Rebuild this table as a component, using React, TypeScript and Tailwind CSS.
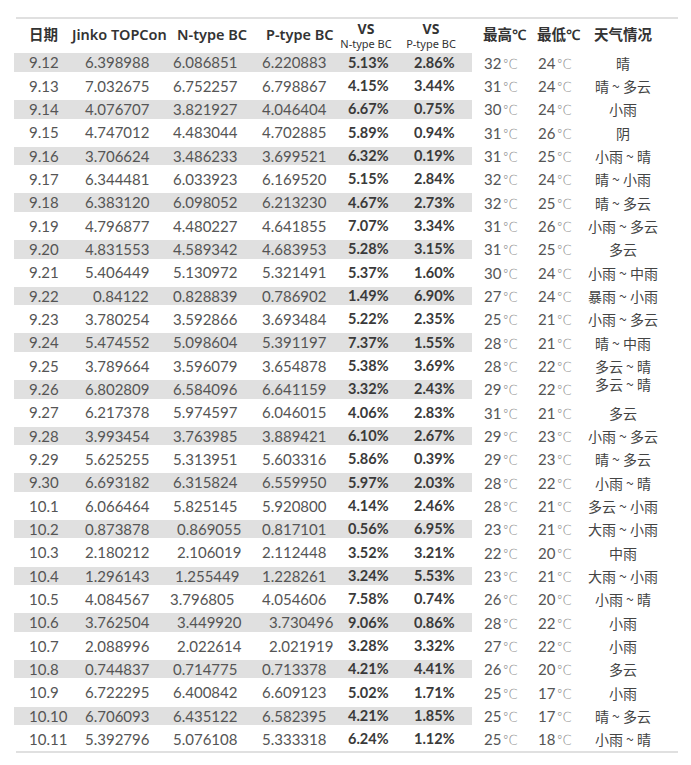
type Row = {
  d: string;
  j: string;
  n: string;
  p: string;
  vn: string;
  vp: string;
  hi: string;
  lo: string;
  w: string;
  js?: string;
  ns?: string;
  ps?: string;
  up?: boolean;
};

// [日期, Jinko, N-type, P-type, VS N, VS P, 最高, 最低, 天气]
const raw: string[][] = [
  ["9.12", "6.398988", "6.086851", "6.220883", "5.13%", "2.86%", "32", "24", "晴"],
  ["9.13", "7.032675", "6.752257", "6.798867", "4.15%", "3.44%", "31", "24", "晴 ~ 多云"],
  ["9.14", "4.076707", "3.821927", "4.046404", "6.67%", "0.75%", "30", "24", "小雨"],
  ["9.15", "4.747012", "4.483044", "4.702885", "5.89%", "0.94%", "31", "26", "阴"],
  ["9.16", "3.706624", "3.486233", "3.699521", "6.32%", "0.19%", "31", "25", "小雨 ~ 晴"],
  ["9.17", "6.344481", "6.033923", "6.169520", "5.15%", "2.84%", "32", "24", "晴 ~ 小雨"],
  ["9.18", "6.383120", "6.098052", "6.213230", "4.67%", "2.73%", "32", "25", "晴 ~ 多云"],
  ["9.19", "4.796877", "4.480227", "4.641855", "7.07%", "3.34%", "31", "26", "小雨 ~ 多云"],
  ["9.20", "4.831553", "4.589342", "4.683953", "5.28%", "3.15%", "31", "25", "多云"],
  ["9.21", "5.406449", "5.130972", "5.321491", "5.37%", "1.60%", "30", "24", "小雨 ~ 中雨"],
  ["9.22", "0.84122", "0.828839", "0.786902", "1.49%", "6.90%", "27", "24", "暴雨 ~ 小雨"],
  ["9.23", "3.780254", "3.592866", "3.693484", "5.22%", "2.35%", "25", "21", "小雨 ~ 多云"],
  ["9.24", "5.474552", "5.098604", "5.391197", "7.37%", "1.55%", "28", "21", "晴 ~ 中雨"],
  ["9.25", "3.789664", "3.596079", "3.654878", "5.38%", "3.69%", "28", "22", "多云 ~ 晴"],
  ["9.26", "6.802809", "6.584096", "6.641159", "3.32%", "2.43%", "29", "22", "多云 ~ 晴"],
  ["9.27", "6.217378", "5.974597", "6.046015", "4.06%", "2.83%", "31", "21", "多云"],
  ["9.28", "3.993454", "3.763985", "3.889421", "6.10%", "2.67%", "29", "23", "小雨 ~ 多云"],
  ["9.29", "5.625255", "5.313951", "5.603316", "5.86%", "0.39%", "29", "23", "晴 ~ 多云"],
  ["9.30", "6.693182", "6.315824", "6.559950", "5.97%", "2.03%", "28", "22", "小雨 ~ 晴"],
  ["10.1", "6.066464", "5.825145", "5.920800", "4.14%", "2.46%", "28", "21", "多云 ~ 小雨"],
  ["10.2", "0.873878", "0.869055", "0.817101", "0.56%", "6.95%", "23", "21", "大雨 ~ 小雨"],
  ["10.3", "2.180212", "2.106019", "2.112448", "3.52%", "3.21%", "22", "20", "中雨"],
  ["10.4", "1.296143", "1.255449", "1.228261", "3.24%", "5.53%", "23", "21", "大雨 ~ 小雨"],
  ["10.5", "4.084567", "3.796805", "4.054606", "7.58%", "0.74%", "26", "20", "小雨 ~ 晴"],
  ["10.6", "3.762504", "3.449920", "3.730496", "9.06%", "0.86%", "28", "22", "小雨"],
  ["10.7", "2.088996", "2.022614", "2.021919", "3.28%", "3.32%", "27", "22", "小雨"],
  ["10.8", "0.744837", "0.714775", "0.713378", "4.21%", "4.41%", "26", "20", "多云"],
  ["10.9", "6.722295", "6.400842", "6.609123", "5.02%", "1.71%", "25", "17", "小雨"],
  ["10.10", "6.706093", "6.435122", "6.582395", "4.21%", "1.85%", "25", "17", "晴 ~ 多云"],
  ["10.11", "5.392796", "5.076108", "5.333318", "6.24%", "1.12%", "25", "18", "小雨 ~ 晴"],
];

const rows: Row[] = raw.map((r) => ({
  d: r[0], j: r[1], n: r[2], p: r[3], vn: r[4], vp: r[5], hi: r[6], lo: r[7], w: r[8],
}));

rows[10].js = "pl-[21px]";
rows[20].ns = "pl-[7px]";
rows[21].ns = "pl-[7px]";
rows[22].ns = "pl-[5px]";
rows[23].ns = "pl-0";
rows[24].ns = "pl-[7px]";
rows[25].ns = "pl-[7px]";
rows[24].ps = "pl-[11px]";
rows[25].ps = "pl-[11px]";
rows[14].up = true;

const num = "font-['Lato',sans-serif] text-[15px] text-[#555]";
const bold = "font-['Lato',sans-serif] font-bold text-[14.5px] text-[#3a3a3a]";
const head = "font-['Noto_Sans','Noto_Sans_CJK_SC',sans-serif] font-semibold text-[14.5px] text-[#333]";
const cjk = "font-['Noto_Sans_CJK_SC',sans-serif] text-[14px] text-[#444]";

function Temp({ v }: { v: string }) {
  return (
    <span className={num}>
      {v}
      <span className="font-['DejaVu_Sans',sans-serif] font-extralight text-[14px] text-[#888] tracking-[-1px] ml-[1px]">℃</span>
    </span>
  );
}

function VsHead({ sub, w }: { sub: string; w: string }) {
  return (
    <div className={`${w} flex flex-col items-center gap-[1px] pt-[1px]`}>
      <span className="font-['Noto_Sans',sans-serif] font-bold text-[14px] leading-[14px] text-[#333]">VS</span>
      <span className="font-['Noto_Sans',sans-serif] text-[11px] leading-[13px] text-[#333]">{sub}</span>
    </div>
  );
}

export default function App() {
  return (
    <div className="w-[691px] h-[765px] bg-white pt-[17px]">
      <div className="ml-[14px] w-[664px]">
        <div className="ml-[2px] h-[2px] bg-[#e0e0e0]" />
        {/* header */}
        <div className="flex items-center h-[32px]">
          <div className={`w-[58px] pl-[15px] ${head}`}>日期</div>
          <div className={`w-[98px] ${head}`}>Jinko TOPCon</div>
          <div className={`w-[88px] pl-[7px] ${head}`}>N-type BC</div>
          <div className={`w-[77px] pl-[8px] ${head}`}>P-type BC</div>
          <VsHead sub="N-type BC" w="w-[62px]" />
          <VsHead sub="P-type BC" w="w-[68px]" />
          <div className="w-[7px]" />
          <div className={`w-[58px] pl-[11px] ${head}`}>最高℃</div>
          <div className={`w-[55px] pl-[7px] ${head}`}>最低℃</div>
          <div className={`w-[76px] text-center ${head}`}>天气情况</div>
        </div>
        {/* body */}
        {rows.map((r, i) => (
          <div key={r.d} className="flex items-center h-[23.34px]">
            <div className={`flex items-center w-[458px] h-[18.5px] ${i % 2 === 0 ? "bg-[#e0e0e0]" : ""}`}>
              <div className={`w-[58px] pl-[15px] ${num}`}>{r.d}</div>
              <div className={`w-[98px] ${r.js ?? "pl-[13px]"} ${num}`}>{r.j}</div>
              <div className={`w-[88px] ${r.ns ?? "pl-[3px]"} ${num}`}>{r.n}</div>
              <div className={`w-[82px] ${r.ps ?? "pl-[4px]"} ${num}`}>{r.p}</div>
              <div className={`w-[65px] pl-[8px] ${bold}`}>{r.vn}</div>
              <div className={`w-[67px] pl-[9px] ${bold}`}>{r.vp}</div>
            </div>
            <div className="w-[58px] pl-[12px]">
              <Temp v={r.hi} />
            </div>
            <div className="w-[55px] pl-[8px]">
              <Temp v={r.lo} />
            </div>
            <div className={`w-[76px] text-center whitespace-nowrap leading-[18px] ${cjk} ${r.up ? "pb-[10px]" : ""}`}>{r.w}</div>
          </div>
        ))}
        <div className="ml-[2px] h-[2px] bg-[#e0e0e0]" />
      </div>
    </div>
  );
}
